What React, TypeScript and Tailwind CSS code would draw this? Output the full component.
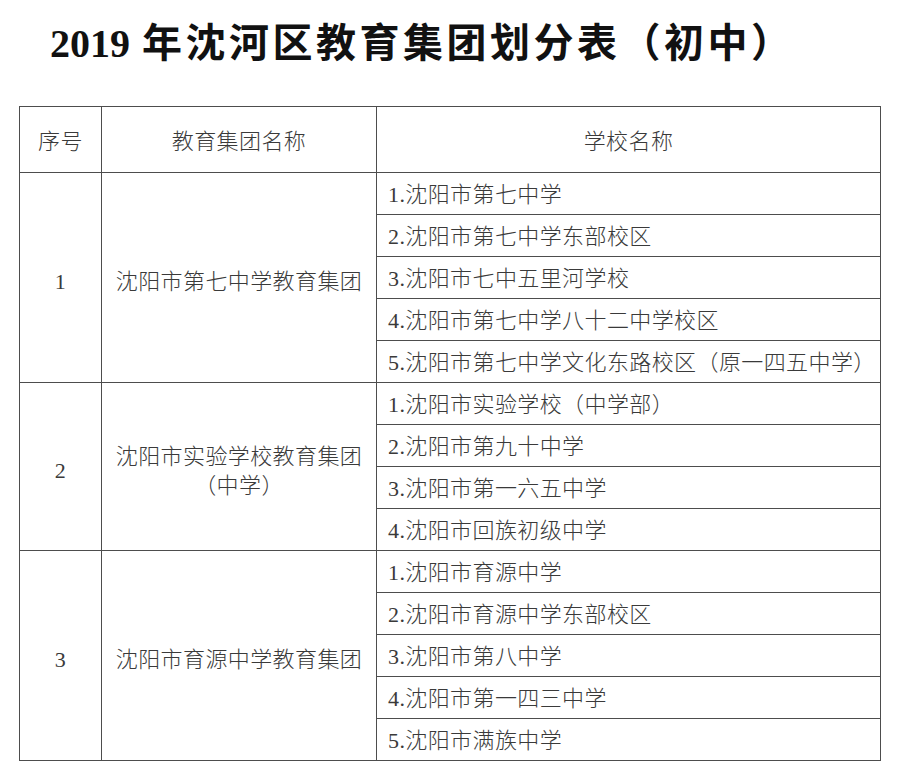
import React from "react";

type Group = {
  no: string;
  name: string[];
  schools: string[];
};

const groups: Group[] = [
  {
    no: "1",
    name: ["沈阳市第七中学教育集团"],
    schools: [
      "1.沈阳市第七中学",
      "2.沈阳市第七中学东部校区",
      "3.沈阳市七中五里河学校",
      "4.沈阳市第七中学八十二中学校区",
      "5.沈阳市第七中学文化东路校区（原一四五中学）",
    ],
  },
  {
    no: "2",
    name: ["沈阳市实验学校教育集团", "（中学）"],
    schools: [
      "1.沈阳市实验学校（中学部）",
      "2.沈阳市第九十中学",
      "3.沈阳市第一六五中学",
      "4.沈阳市回族初级中学",
    ],
  },
  {
    no: "3",
    name: ["沈阳市育源中学教育集团"],
    schools: [
      "1.沈阳市育源中学",
      "2.沈阳市育源中学东部校区",
      "3.沈阳市第八中学",
      "4.沈阳市第一四三中学",
      "5.沈阳市满族中学",
    ],
  },
];

const cell = "border border-[#4d4d4d] align-middle";

const App: React.FC = () => {
  return (
    <main className="w-[900px] h-[775px] bg-white pt-[20px] overflow-hidden">
      {/* title */}
      <h1 className="pl-[50px] h-[40px] leading-[40px] text-[#111] font-bold whitespace-nowrap">
        <span className="font-['Liberation_Serif',serif] text-[40px]">2019</span>
        <span className="ml-[12px] font-['Noto_Sans_CJK_SC',sans-serif] text-[40px] tracking-[3.5px]">
          年沈河区教育集团划分表（初中）
        </span>
      </h1>

      <div className="mt-[46px] pl-[19px]">
        <table className="w-[861px] table-fixed border-collapse font-['Liberation_Serif','Noto_Sans_CJK_SC',serif] text-[22px] tracking-[0.4px] text-[#3a3a3a] font-light">
          <colgroup>
            <col className="w-[82px]" />
            <col className="w-[275px]" />
            <col className="w-[504px]" />
          </colgroup>
          <thead>
            <tr>
              <th className={`${cell} h-[66px] font-light text-center pt-1`}>序号</th>
              <th className={`${cell} font-light text-center pt-1`}>教育集团名称</th>
              <th className={`${cell} font-light text-center pt-1`}>学校名称</th>
            </tr>
          </thead>
          <tbody>
            {groups.map((g) =>
              g.schools.map((s, i) => (
                <tr key={g.no + s}>
                  {i === 0 && (
                    <>
                      <td rowSpan={g.schools.length} className={`${cell} text-center pt-2`}>
                        {g.no}
                      </td>
                      <td
                        rowSpan={g.schools.length}
                        className={`${cell} text-center leading-[29px] pt-2`}
                      >
                        {g.name.map((n) => (
                          <div key={n}>{n}</div>
                        ))}
                      </td>
                    </>
                  )}
                  <td className={`${cell} h-[42px] pl-[11px] whitespace-nowrap pt-[2px]`}>{s}</td>
                </tr>
              ))
            )}
          </tbody>
        </table>
      </div>
    </main>
  );
};

export default App;
